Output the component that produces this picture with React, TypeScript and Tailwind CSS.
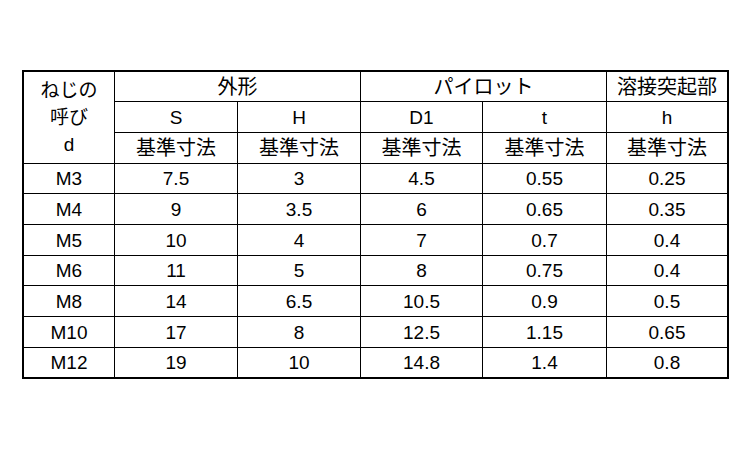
const rows = [
  ["M3", "7.5", "3", "4.5", "0.55", "0.25"],
  ["M4", "9", "3.5", "6", "0.65", "0.35"],
  ["M5", "10", "4", "7", "0.7", "0.4"],
  ["M6", "11", "5", "8", "0.75", "0.4"],
  ["M8", "14", "6.5", "10.5", "0.9", "0.5"],
  ["M10", "17", "8", "12.5", "1.15", "0.65"],
  ["M12", "19", "10", "14.8", "1.4", "0.8"],
];

const cell = "bg-white flex items-center justify-center";
const jp = "text-[20px]";

export default function App() {
  return (
    <div
      className="w-[750px] h-[450px] bg-white pt-[70px] pl-[22px] text-black text-[19px] leading-none"
      style={{ fontFamily: '"Liberation Sans", "Noto Sans CJK JP", sans-serif' }}
    >
      <div className="w-fit border-2 border-black bg-black grid gap-px grid-cols-[90px_122px_122px_121px_123px_120px] grid-rows-[29px_30px_30px_29px_30px_30px_29px_30px_30px_29px]">
        {/* header */}
        <div className={`${cell} row-span-3 flex-col leading-[27px]`}>
          <span>ねじの</span>
          <span>呼び</span>
          <span>d</span>
        </div>
        <div className={`${cell} col-span-2 ${jp}`}>外形</div>
        <div className={`${cell} col-span-2 ${jp}`}>パイロット</div>
        <div className={`${cell} ${jp}`}>溶接突起部</div>

        {["S", "H", "D1", "t", "h"].map((s) => (
          <div key={s} className={cell}>
            {s}
          </div>
        ))}
        {[0, 1, 2, 3, 4].map((i) => (
          <div key={i} className={`${cell} ${jp}`}>
            基準寸法
          </div>
        ))}

        {/* data */}
        {rows.map((r) =>
          r.map((v, j) => (
            <div key={r[0] + j} className={cell}>
              {v}
            </div>
          )),
        )}
      </div>
    </div>
  );
}
